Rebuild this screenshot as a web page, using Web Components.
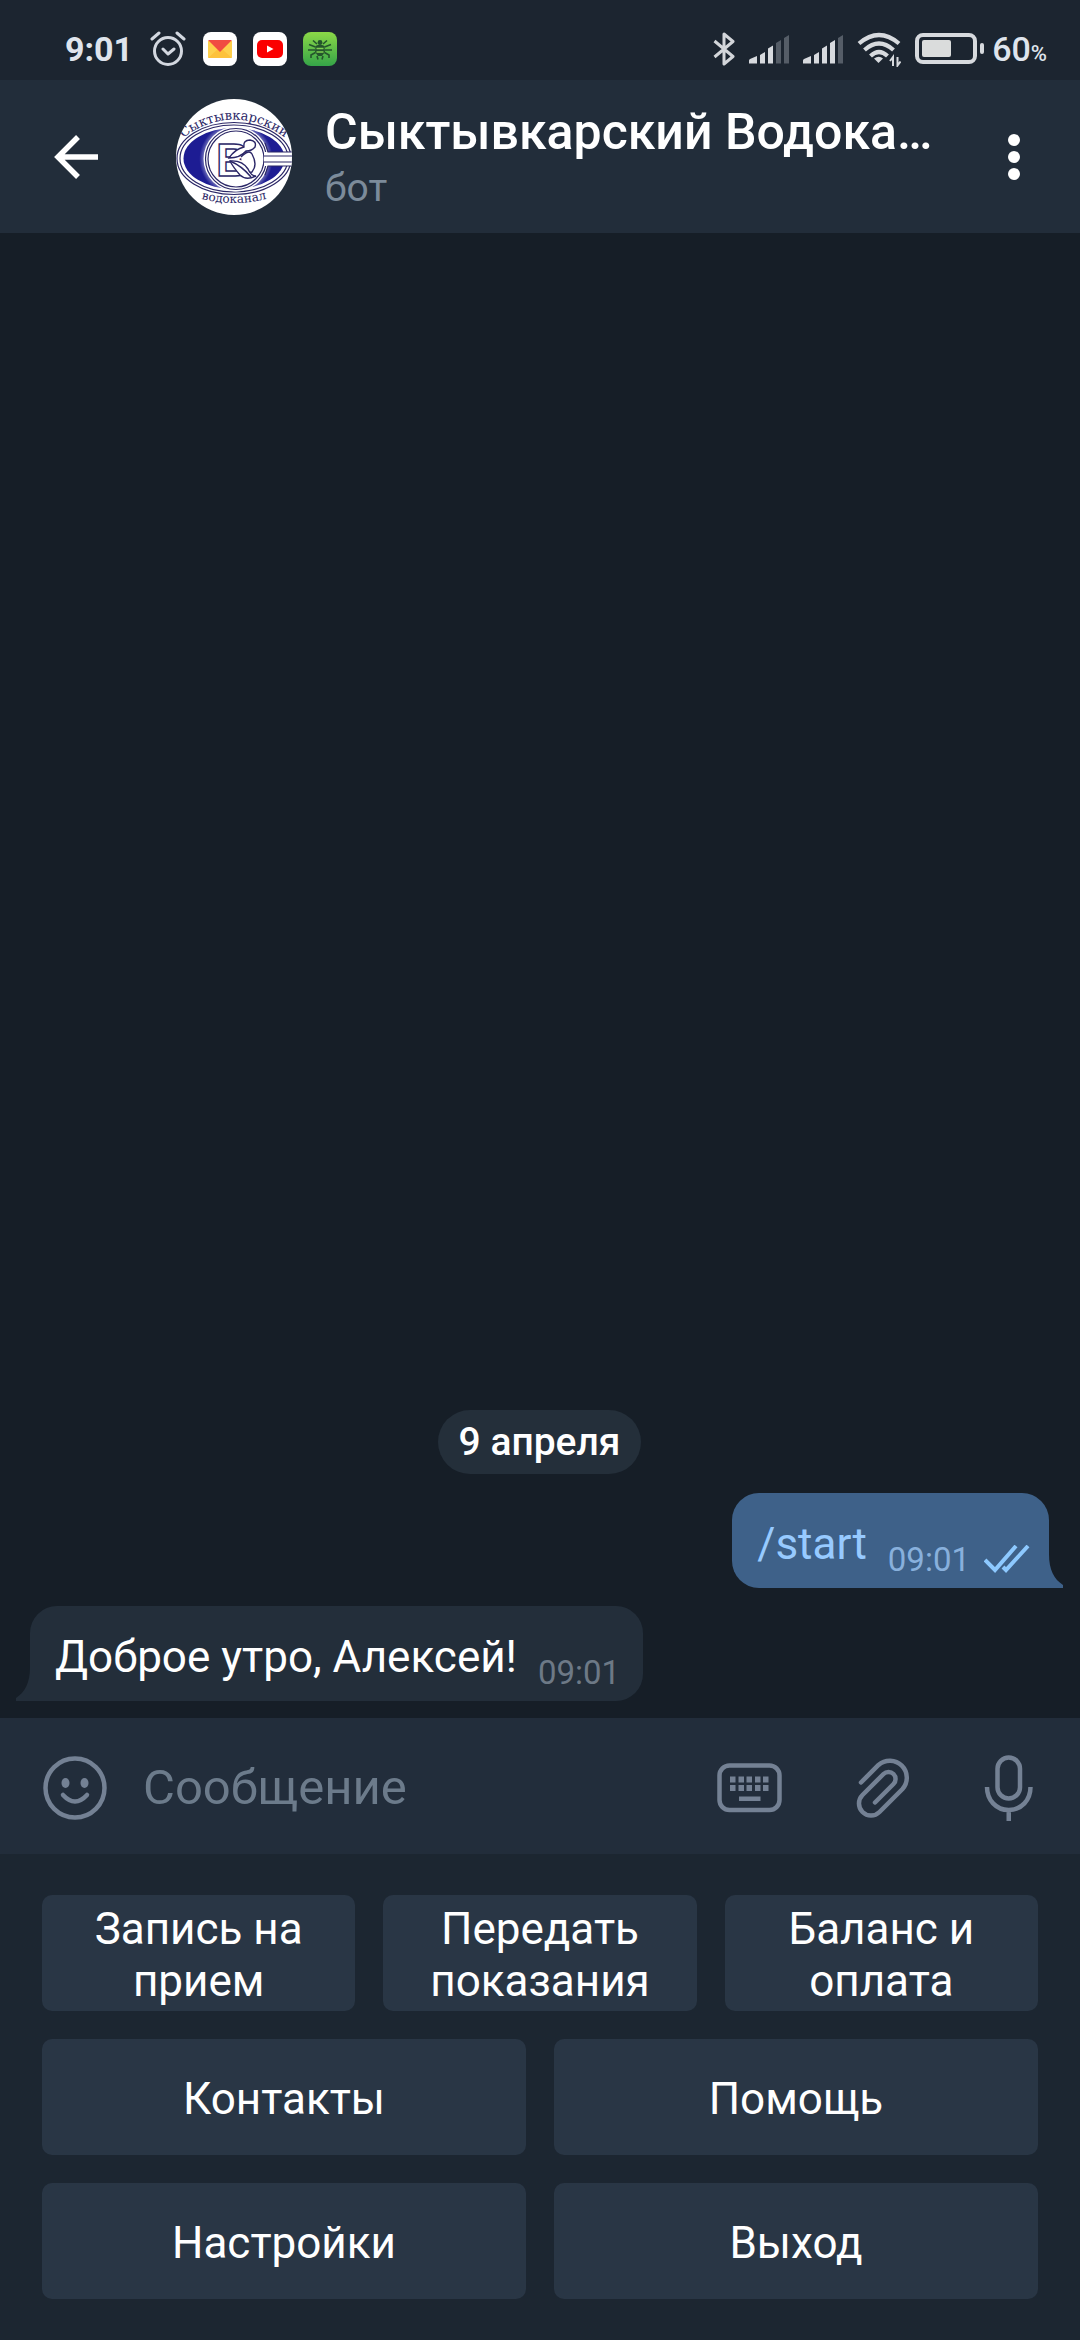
<!DOCTYPE html>
<html lang="ru">
<head>
<meta charset="utf-8">
<meta name="viewport" content="width=device-width, initial-scale=1">
<title>Сыктывкарский Водоканал</title>
<style>
  html, body { margin: 0; background: #161e27; }
  body { font-family: Roboto, "Noto Sans", sans-serif; color: #fff; }
</style>
</head>
<body>
<chat-app></chat-app>

<template id="chat-app">
  <style>
    :host { display: flex; flex-direction: column; min-height: 100vh; background: #161e27; }
    chat-log { flex: 1; }
    .row { display: flex; gap: 28px; }
  </style>
  <status-bar></status-bar>
  <chat-header>
    <span slot="title">Сыктывкарский Водока…</span>
    <span slot="subtitle">бот</span>
  </chat-header>
  <chat-log>
    <date-pill>9 апреля</date-pill>
    <chat-message out time="09:01">/start</chat-message>
    <chat-message time="09:01">Доброе утро, Алексей!</chat-message>
  </chat-log>
  <message-composer></message-composer>
  <bot-keyboard>
    <div class="row">
      <bot-key>Запись на прием</bot-key>
      <bot-key>Передать показания</bot-key>
      <bot-key>Баланс и оплата</bot-key>
    </div>
    <div class="row">
      <bot-key>Контакты</bot-key>
      <bot-key>Помощь</bot-key>
    </div>
    <div class="row">
      <bot-key>Настройки</bot-key>
      <bot-key>Выход</bot-key>
    </div>
  </bot-keyboard>
</template>

<template id="status-bar">
  <style>
    :host { display: flex; justify-content: space-between; align-items: center; box-sizing: border-box; height: 80px; padding: 18px 33px 0 65px; background: #1c2530; color: #dfe4ec; }
    .group { display: flex; align-items: center; gap: 16px; }
    .right { gap: 14px; }
    svg { display: block; flex: none; }
    .time { font-size: 34px; line-height: 40px; font-weight: 700; }
    .charge { display: flex; align-items: baseline; font-size: 34px; line-height: 40px; font-weight: 500; }
    .charge small { font-size: 22px; line-height: 24px; }
    .battery { display: flex; align-items: center; gap: 8px; }
  </style>
  <div class="group">
    <span class="time">9:01</span>
    <svg width="38" height="36" viewBox="0 0 38 36" fill="none" stroke="#d3d8e0" stroke-width="3" stroke-linecap="round" stroke-linejoin="round"><circle cx="19" cy="20" r="13.5"/><path d="M14 18l5 5 6-5M3 8l7-6M35 8l-7-6"/></svg>
    <svg width="34" height="34" viewBox="0 0 34 34"><rect width="34" height="34" rx="8" fill="#fff"/><path d="M5 9h24v16a1 1 0 0 1-1 1H6a1 1 0 0 1-1-1z" fill="#fed04d"/><path d="M5 26l10-9h4l10 9z" fill="#fdc23b"/><path d="M5 8h24L17 20z" fill="#f14b42"/></svg>
    <svg width="34" height="34" viewBox="0 0 34 34"><rect width="34" height="34" rx="8" fill="#fff"/><rect x="4" y="8" width="26" height="18" rx="5" fill="#fb0000"/><path d="M14 13.500l6.500 3.500-6.500 3.500z" fill="#fff"/></svg>
    <svg width="34" height="34" viewBox="0 0 34 34"><defs><linearGradient id="g" x2="0" y2="1"><stop stop-color="#8bd847"/><stop offset="1" stop-color="#35a448"/></linearGradient></defs><rect width="34" height="34" rx="8" fill="url(#g)"/><g fill="none" stroke="#24542c" stroke-width="1.600"><path d="M12.500 15L6 12.500M12 18H5M12.500 20.500L8 23v3M21.500 15l6.500-2.500M22 18h7M21.500 20.500L26 23v3M14 12l-4-3.500M20 12l4-3.500M14 24l1 3.500M20 24l-1 3.500"/></g><path d="M12.500 14q4.500-3 9 0L22 20l-3 4h-4l-3-4z" fill="#24542c"/><circle cx="17" cy="10.500" r="2.400" fill="#24542c"/><path d="M13.500 16.500h7M13.500 20h7" stroke="#7fd050" stroke-width="1.400"/></svg>
  </div>
  <div class="group right">
    <svg width="22" height="34" viewBox="0 0 22 34" fill="none" stroke="#d3d6da" stroke-width="3" stroke-linejoin="round"><path d="M1.500 9L20 24.500 11 32V2l9 7.500L1.500 25"/></svg>
    <svg width="40" height="30" viewBox="0 0 40 30" fill="#d7dade"><path d="M0 29.500v-3q0-1 1-1.500l7-3v7.500zM11 29.500V21l5-3v11.500zM19 29.500v-15l5-3v18z"/><path d="M27 29.500V9l5-3v23.500zM35 29.500V4l5-3v28.500z" fill="#555d67"/></svg>
    <svg width="40" height="30" viewBox="0 0 40 30" fill="#d7dade"><path d="M0 29.500v-3q0-1 1-1.500l7-3v7.500zM11 29.500V21l5-3v11.500zM19 29.500v-15l5-3v18zM27 29.500V9l5-3v23.500z"/><path d="M35 29.500V4l5-3v28.500z" fill="#555d67"/></svg>
    <svg width="44" height="36" viewBox="0 0 44 36" fill="none" stroke="#d7dade" stroke-width="4.200"><path d="M2 12.500q20-17 40 0M7.500 19q14.500-13 29 0M13.500 25q8.500-8 17 0"/><path d="M17 27.500q5-3.500 9 0l-4.500 4.500z" fill="#d7dade" stroke="none"/><path d="M36 35v-9l-3 4M40.500 26v8.500l3-4" stroke-width="2"/></svg>
    <div class="battery">
      <svg width="69" height="32" viewBox="0 0 69 32"><rect x="2" y="2" width="58" height="27" rx="6" fill="none" stroke="#d7dade" stroke-width="4"/><rect x="7" y="7" width="29" height="17" rx="2" fill="#dadcdc"/><rect x="65" y="10" width="4" height="11" rx="2" fill="#d7dade"/></svg>
      <span class="charge">60<small>%</small></span>
    </div>
  </div>
</template>

<template id="chat-header">
  <style>
    :host { display: flex; align-items: center; box-sizing: border-box; height: 153px; padding: 0 30px 0 40px; background: #222d3a; }
    button { flex: none; display: block; margin: 0; padding: 0; border: 0; background: none; }
    svg { display: block; }
    .avatar { flex: none; width: 116px; height: 116px; margin: 0 33px 0 64px; }
    .who { flex: 1; min-width: 0; display: flex; flex-direction: column; gap: 2px; }
    .title { font-size: 50px; line-height: 60px; font-weight: 500; white-space: nowrap; overflow: hidden; }
    .subtitle { font-size: 39px; line-height: 48px; color: #7c8b9a; }
  </style>
  <button aria-label="Назад">
    <svg width="72" height="72" viewBox="0 0 72 72" fill="none" stroke="#fff" stroke-width="5.500"><path d="M58 36H18M38 16L18 36l20 20"/></svg>
  </button>
  <svg class="avatar" viewBox="0 0 116 116" aria-label="Логотип">
    <defs>
      <clipPath id="round"><circle cx="58" cy="58" r="58"/></clipPath>
      <path id="top" d="M8 38Q58 3 108 38"/>
      <path id="bottom" d="M22 99Q58 109 94 99"/>
      <radialGradient id="blue" cx="60" cy="60" r="54" gradientUnits="userSpaceOnUse"><stop offset=".56" stop-color="#8f90c8"/><stop offset=".68" stop-color="#1d1c93"/></radialGradient>
    </defs>
    <g clip-path="url(#round)">
      <rect width="116" height="116" fill="#fff"/>
      <g fill="#fff" stroke="#2b2767" stroke-width="1.200">
        <ellipse cx="58" cy="59.500" rx="57" ry="36"/>
        <ellipse cx="58" cy="59.500" rx="54" ry="33.500"/>
      </g>
      <ellipse cx="58" cy="59.500" rx="50.500" ry="30.500" fill="url(#blue)"/>
      <circle cx="60" cy="60" r="32.500" fill="#fff"/>
      <circle cx="60" cy="60" r="30.500" fill="none" stroke="#2b2767" stroke-width="1.200"/>
      <circle cx="60" cy="60" r="28" fill="none" stroke="#2b2767" stroke-width="1.200"/>
      <path d="M88 53H120V67H88z" fill="#fff"/>
      <path d="M116 53H92l-3-9M116 67H92l-3 9M116 57H88M116 63H88" fill="none" stroke="#2b2767" stroke-width="1.200"/>
      <g fill="#fff" stroke="#2b2767" stroke-width="1.400">
        <text x="40" y="77" font-family="Liberation Sans, sans-serif" font-weight="700" font-size="47">В</text>
        <path d="M53 59Q59 50 68 48Q67 41 74 41Q81 42 79 48Q76 52 70 52Q64 59 53 59z"/>
        <path d="M65 58Q73 50 76 55Q82 66 76 73Q70 75 66 64"/>
        <path d="M54 62Q66 61 72 70Q75 77 80 77Q70 82 64 76Q57 68 54 62z"/>
        <path d="M54 62Q66 67 75 78" fill="none"/>
      </g>
      <g fill="#2b2767" font-family="DejaVu Serif, serif" font-size="12">
        <text text-anchor="middle" font-size="13"><textPath href="#top" startOffset="50%">Сыктывкарский</textPath></text>
        <text text-anchor="middle"><textPath href="#bottom" startOffset="50%">водоканал</textPath></text>
      </g>
    </g>
  </svg>
  <div class="who">
    <div class="title"><slot name="title"></slot></div>
    <div class="subtitle"><slot name="subtitle"></slot></div>
  </div>
  <button aria-label="Меню">
    <svg width="72" height="72" viewBox="0 0 72 72" fill="#fff"><circle cx="36" cy="19" r="6"/><circle cx="36" cy="36" r="6"/><circle cx="36" cy="53" r="6"/></svg>
  </button>
</template>

<template id="chat-log">
  <style>
    :host { display: flex; flex-direction: column; justify-content: flex-end; gap: 18px; padding: 20px 31px 17px 30px; }
  </style>
  <slot></slot>
</template>

<template id="date-pill">
  <style>
    :host { display: block; align-self: center; box-sizing: border-box; margin-bottom: 1px; padding: 8px 21px; border-radius: 32px; background: #242f3a; font-size: 39px; line-height: 48px; font-weight: 500; }
  </style>
  <slot></slot>
</template>

<template id="chat-message">
  <style>
    :host { position: relative; display: flex; align-items: flex-end; align-self: flex-start; gap: 21px; padding: 0 23px 0 25px; border-radius: 27px 27px 27px 0; background: #232e3a; --tail: #232e3a; }
    :host([out]) { align-self: flex-end; padding-right: 19px; border-radius: 27px 27px 0 27px; background: #3e6189; --tail: #3e6189; color: #97caff; }
    .text { padding: 25px 0 18px; font-size: 44px; line-height: 52px; }
    .meta { display: flex; align-items: center; gap: 14px; padding-bottom: 8px; font-size: 33px; line-height: 40px; color: #6d7986; }
    :host([out]) .meta { color: #88b0dc; }
    svg { display: block; }
    .checks { display: none; }
    :host([out]) .checks { display: block; }
    .tail { position: absolute; left: -14px; bottom: 0; fill: var(--tail); }
    :host([out]) .tail { left: auto; right: -14px; transform: scaleX(-1); }
  </style>
  <span class="text"><slot></slot></span>
  <span class="meta"><span class="time"></span>
    <svg class="checks" width="46" height="30" viewBox="0 0 46 30" fill="none" stroke="#8dc9ff" stroke-width="4"><path d="M1 15l10 10L32 1M19 22l3 3L44 1"/></svg>
  </span>
  <svg class="tail" width="15" height="34" viewBox="0 0 15 34"><path d="M15 0h-1C14 16 9 25 0 31v3h15z"/></svg>
</template>

<template id="message-composer">
  <style>
    :host { display: flex; align-items: center; box-sizing: border-box; height: 136px; padding: 4px 36px 0 39px; background: #222d3b; }
    button { flex: none; display: block; margin: 0; padding: 0; border: 0; background: none; }
    svg { display: block; fill: none; stroke: #748194; stroke-width: 4.500; }
    label { flex: 1; min-width: 0; display: flex; padding: 0 32px; }
    input { flex: 1; min-width: 0; margin: 0; padding: 0; border: 0; outline: 0; background: none; color: #fff; font: 49px/60px Roboto, "Noto Sans", sans-serif; }
    input::placeholder { color: #6c7b8b; opacity: 1; }
    .tools { display: flex; gap: 54px; }
  </style>
  <button aria-label="Эмодзи">
    <svg width="72" height="72" viewBox="0 0 72 72"><circle cx="36" cy="36" r="29.500"/><g fill="#748194" stroke="none"><ellipse cx="26.500" cy="31" rx="4" ry="5"/><ellipse cx="45.500" cy="31" rx="4" ry="5"/></g><path d="M24 43Q36 56 48 43" stroke-linecap="round"/></svg>
  </button>
  <label><input type="text" aria-label="Сообщение" placeholder="Сообщение"></label>
  <div class="tools">
    <button aria-label="Клавиатура">
      <svg width="78" height="72" viewBox="0 0 78 72"><rect x="5.500" y="13.500" width="60" height="44.500" rx="10"/><g stroke="none" fill="#748194"><path d="M16 24.500h5.500v6H16zM24.500 24.500H30v6h-5.500zM32.500 24.500H38v6h-5.500zM41 24.500h5.500v6H41zM49 24.500h5.500v6H49zM16 33h5.500v6H16zM24.500 33H30v6h-5.500zM32.500 33H38v6h-5.500zM41 33h5.500v6H41zM49 33h5.500v6H49zM25 44.500h21.500V49H25z"/></g></svg>
    </button>
    <button aria-label="Прикрепить">
      <svg width="72" height="72" viewBox="0 0 72 72"><path d="M15 30.500L32.500 13A17 17 0 0 1 56.500 37L33.500 60A12 12 0 0 1 16.500 43L37.500 22A7 7 0 0 1 47.500 32L29 50.500" stroke-linecap="round"/></svg>
    </button>
    <button aria-label="Голосовое сообщение">
      <svg width="72" height="72" viewBox="0 0 72 72"><rect x="25.500" y="5.500" width="22.500" height="41" rx="11.250"/><path d="M15 35C15 48 24 58 36.750 58S58.500 48 58.500 35M36.750 58v11"/></svg>
    </button>
  </div>
</template>

<template id="bot-keyboard">
  <style>
    :host { display: flex; flex-direction: column; gap: 28px; padding: 41px 42px; background: #1c2631; }
  </style>
  <slot></slot>
</template>

<template id="bot-key">
  <style>
    :host { display: flex; flex: 1 1 0; min-width: 0; }
    button { flex: 1; min-width: 0; box-sizing: border-box; min-height: 116px; margin: 0; padding: 4px 40px 0; border: 0; border-radius: 10px; background: #293645; color: #fff; font: 44px/52px Roboto, "Noto Sans", sans-serif; }
  </style>
  <button type="button"><slot></slot></button>
</template>

<script>
  class TemplateElement extends HTMLElement {
    constructor() {
      super();
      const template = document.getElementById(this.localName);
      this.attachShadow({ mode: "open" }).append(template.content.cloneNode(true));
    }
  }

  class ChatMessage extends TemplateElement {
    connectedCallback() {
      this.shadowRoot.querySelector(".time").textContent = this.getAttribute("time");
    }
  }

  customElements.define("chat-message", ChatMessage);
  for (const name of ["status-bar", "chat-header", "chat-log", "date-pill", "message-composer", "bot-keyboard", "bot-key", "chat-app"]) {
    customElements.define(name, class extends TemplateElement {});
  }
</script>
</body>
</html>
